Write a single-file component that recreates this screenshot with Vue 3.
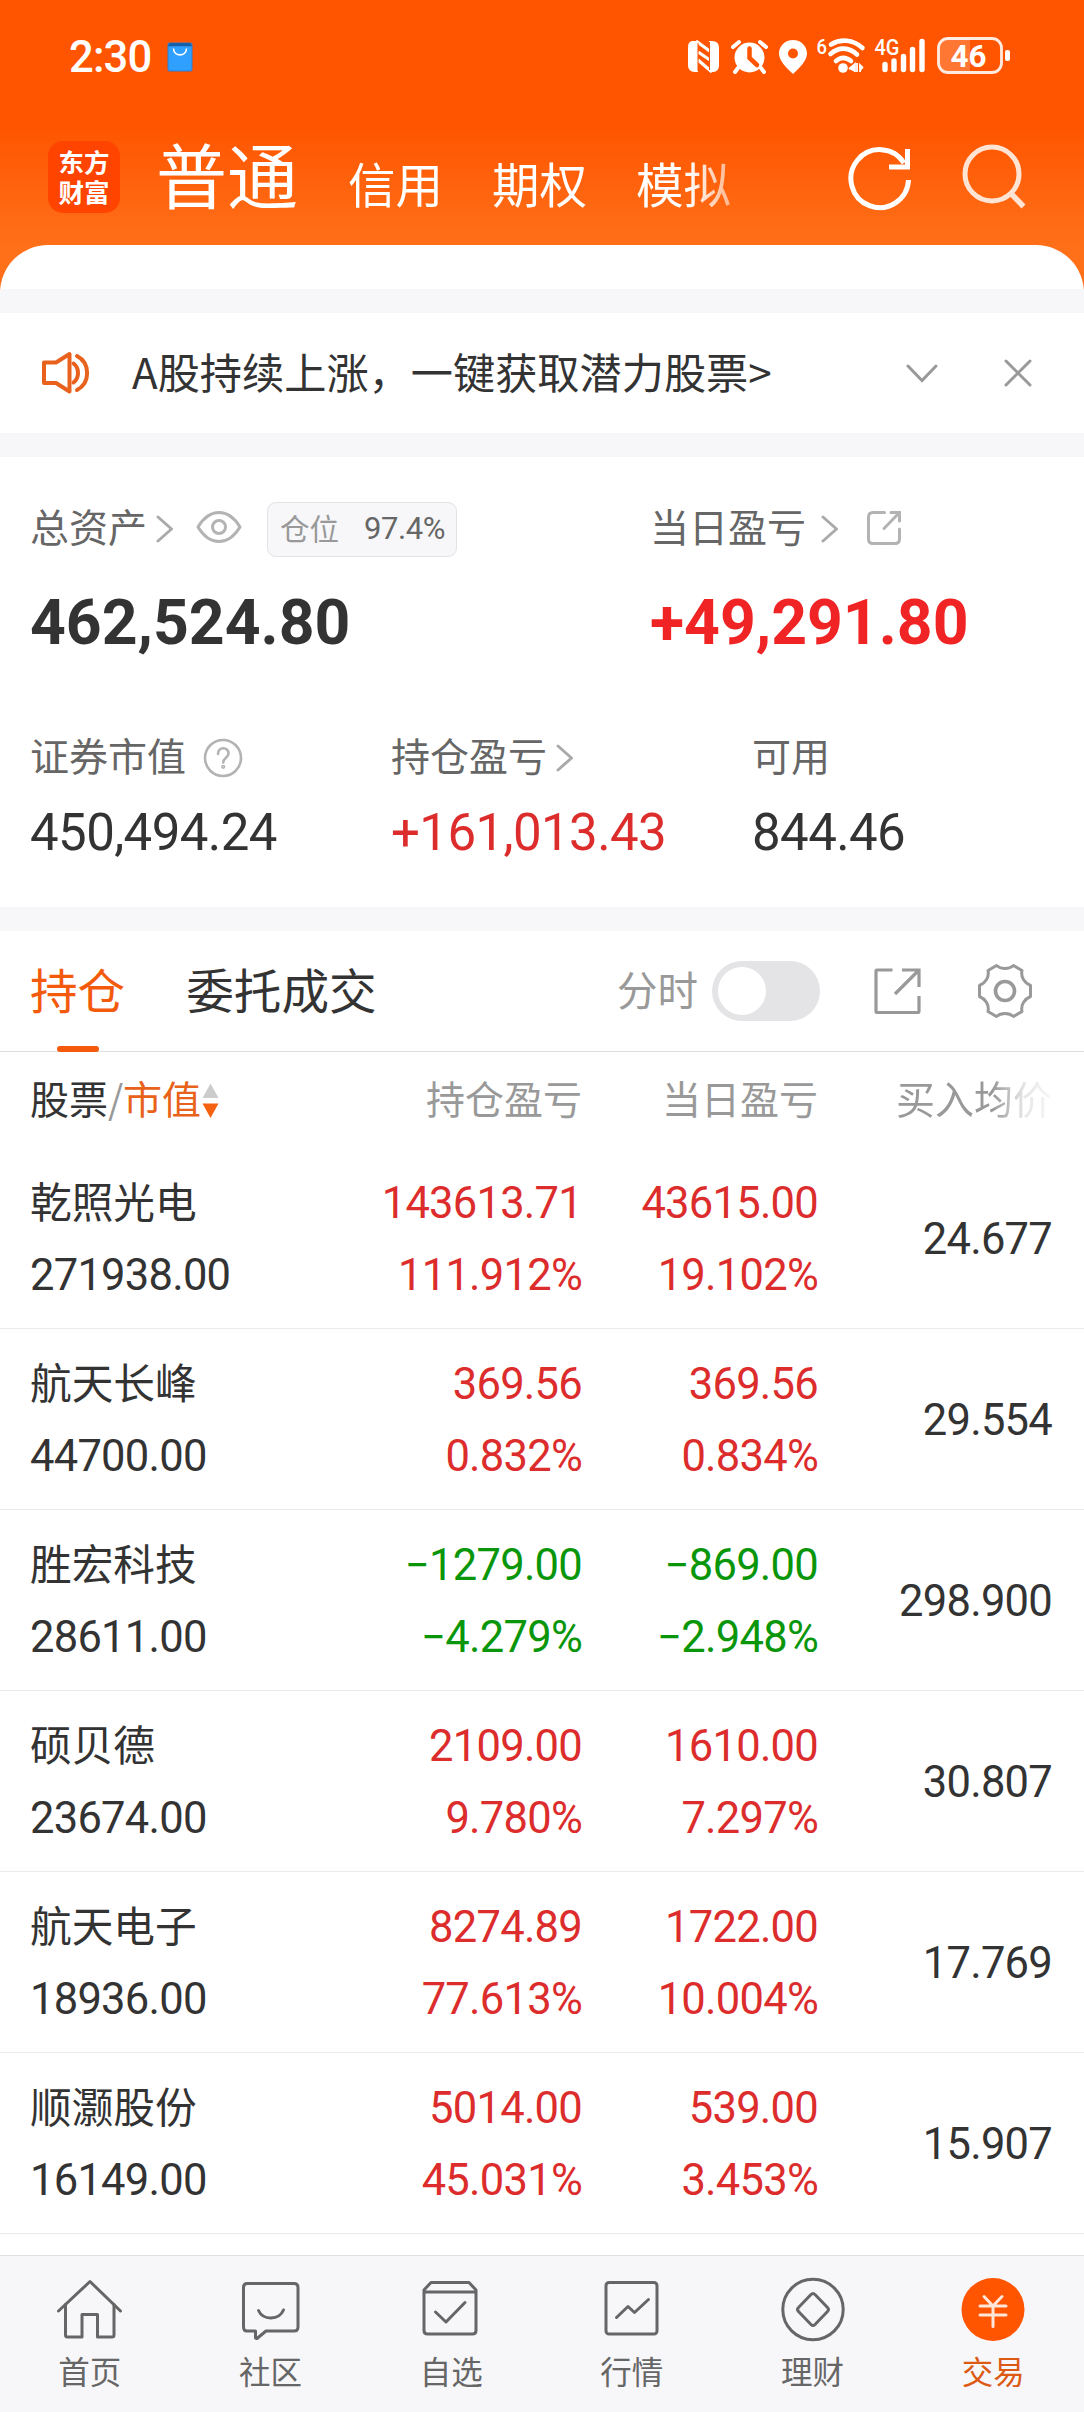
<script setup>
import { ref } from 'vue'

const accounts = ['信用', '期权', '模拟']

const holdings = ref([
  { name: '乾照光电', value: '271938.00', total: '143613.71', totalPct: '111.912%', day: '43615.00', dayPct: '19.102%', cost: '24.677' },
  { name: '航天长峰', value: '44700.00', total: '369.56', totalPct: '0.832%', day: '369.56', dayPct: '0.834%', cost: '29.554' },
  { name: '胜宏科技', value: '28611.00', total: '-1279.00', totalPct: '-4.279%', day: '-869.00', dayPct: '-2.948%', cost: '298.900' },
  { name: '硕贝德', value: '23674.00', total: '2109.00', totalPct: '9.780%', day: '1610.00', dayPct: '7.297%', cost: '30.807' },
  { name: '航天电子', value: '18936.00', total: '8274.89', totalPct: '77.613%', day: '1722.00', dayPct: '10.004%', cost: '17.769' },
  { name: '顺灏股份', value: '16149.00', total: '5014.00', totalPct: '45.031%', day: '539.00', dayPct: '3.453%', cost: '15.907' },
])

const tone = (v) => (v.startsWith('-') ? 'down' : 'up')
const shown = (v) => v.replace('-', '−')
</script>

<template>
  <div class="page">
    <header class="top">
      <div class="status">
        <span class="clock">2:30</span>
        <svg class="bag" width="26" height="30" viewBox="0 0 26 30">
          <rect x="0.5" y="0.5" width="25" height="29" rx="2.5" fill="#2f7fd0" />
          <path d="M3 1H23L25 4H1Z" fill="#1560a8" />
          <rect x="1.5" y="4.5" width="23" height="24" rx="1" fill="#2fa0ff" />
          <path d="M6.5 6.5C7 15 19 15 19.5 6.5" fill="none" stroke="#fff" stroke-width="1.6" />
        </svg>
        <svg class="sys" width="326" height="42" viewBox="686 34 326 42" fill="#fff">
          <path d="M693 41h5v31h-3c-5 0-7-3-7-7V47c0-4 2-6 5-6z" />
          <path d="M709 41h3c5 0 7 3 7 7v17c0 4-2 7-6 7h-4z" />
          <path d="M698 42L709 50V71L698 63Z" fill="#ff5500" />
          <path d="M696 41L711 52M698 52L710 60M698 60L712 72" stroke="#fff" stroke-width="3.2" />
          <path d="M698 43V71M709.500 42V70" stroke="#ff5500" stroke-width="1" />
          <circle cx="749.5" cy="57.500" r="15" />
          <path d="M733 47L739 42M766 47L760 42M738 68L735 72M761 68L764 72" stroke="#fff" stroke-width="4" stroke-linecap="round" />
          <path d="M749.500 48.500V58L757 65" fill="none" stroke="#ff5500" stroke-width="4.500" stroke-linecap="round" />
          <path fill-rule="evenodd" d="M793 40c8 0 14 6 14 13.500 0 7-7 14-14 20.500-7-6.500-14-13.500-14-20.500C779 46 785 40 793 40zm0 8.500a5 5 0 1 0 0 10 5 5 0 0 0 0-10z" />
          <text x="816.500" y="54" font-family="Roboto, sans-serif" font-size="21" font-weight="500" textLength="10.500" lengthAdjust="spacingAndGlyphs">6</text>
          <g fill="none" stroke="#fff" stroke-width="4.600" stroke-linecap="round">
            <path d="M831 44.500C841 38.500 853 39.500 862.500 48" />
            <path d="M830.500 54C839 46.500 849 47 857 54.500" />
            <path d="M836 61C840.500 57 846 57 851 61" />
          </g>
          <circle cx="843" cy="68" r="4.800" />
          <path d="M849 69L855 64V72M857 63V72M860 72V65L863 68" stroke="#fff" stroke-width="1.800" />
          <text x="874.500" y="54.500" font-family="Roboto, sans-serif" font-size="22" font-weight="500" textLength="25" lengthAdjust="spacingAndGlyphs">4G</text>
          <path d="M885 64.500V69.500M894 61V69.500M903.500 56.500V69.500M912.500 49.500V69.500M922 41.500V69.500" stroke="#fff" stroke-width="5.400" stroke-linecap="round" />
          <path d="M947 38H970V72H947Q939 72 939 64V46Q939 38 947 38Z" fill="#fff" fill-opacity="0.2" />
          <rect x="938.500" y="38.500" width="63" height="34" rx="9.500" fill="none" stroke="#fff" stroke-opacity="0.88" stroke-width="2.800" />
          <rect x="1005" y="50" width="5" height="11" rx="2" />
          <text x="950.500" y="67" font-family="Roboto, sans-serif" font-size="32" font-weight="700" textLength="36" lengthAdjust="spacingAndGlyphs">46</text>
        </svg>
      </div>

      <nav class="accounts">
        <div class="logo"><span>东方</span><span>财富</span></div>
        <span class="current">普通</span>
        <div class="others">
          <span v-for="a in accounts" :key="a">{{ a }}</span>
        </div>
        <svg class="refresh" width="66" height="66" viewBox="847 145 66 66" fill="none" stroke="#fff" stroke-width="5">
          <path d="M908.500 180A28.800 29 0 1 1 904 163" />
          <path d="M907.500 149V167H889" />
        </svg>
        <svg class="search" width="64" height="66" viewBox="961 144 64 66" fill="none" stroke="#ffe3d3" stroke-width="5">
          <circle cx="991" cy="174" r="27" />
          <path d="M1009.500 193L1022.500 206.500" stroke-width="5.500" />
        </svg>
      </nav>
    </header>

    <main class="sheet">
      <div class="lip"></div>

      <section class="notice">
        <svg width="50" height="44" viewBox="41 351 50 44" fill="none" stroke="#e8621e" stroke-width="4" stroke-linejoin="round" stroke-linecap="round">
          <path d="M44 362.500H56L69.500 354V391.500L56 383H44Z" />
          <path d="M73.500 363.500C79.500 368 79.500 378 73.500 382.500M77 356C90.500 363 90.500 383 77 390" />
        </svg>
        <p>A股持续上涨，一键获取潜力股票&gt;</p>
        <svg class="fold" width="32" height="20" viewBox="0 0 32 20" fill="none" stroke="#999" stroke-width="3" stroke-linecap="round">
          <path d="M2 3L16 17.500L30 3" />
        </svg>
        <svg class="close" width="28" height="28" viewBox="0 0 28 28" fill="none" stroke="#999" stroke-width="3" stroke-linecap="round">
          <path d="M2 2L26 26M26 2L2 26" />
        </svg>
      </section>

      <section class="assets">
        <div class="primary">
          <div class="cell">
            <div class="label">
              <span>总资产</span>
              <svg class="arrow" width="18" height="28" viewBox="0 0 18 28"><path d="M2 2L15.500 14L2 26" /></svg>
              <svg class="eye" width="46" height="34" viewBox="0 0 46 34" fill="none" stroke="#b3b3b3" stroke-width="3">
                <path d="M2 17C8 7 15 2.500 23 2.500S38 7 44 17C38 27 31 31.500 23 31.500S8 27 2 17Z" stroke-linejoin="round" />
                <circle cx="23" cy="17" r="6.500" />
              </svg>
              <span class="pill"><i>仓位</i><b>97.4%</b></span>
            </div>
            <div class="big">462,524.80</div>
          </div>
          <div class="cell">
            <div class="label">
              <span>当日盈亏</span>
              <svg class="arrow wide" width="18" height="28" viewBox="0 0 18 28"><path d="M2 2L15.500 14L2 26" /></svg>
              <svg class="share" width="36" height="36" viewBox="0 0 36 36" fill="none" stroke="#b3b3b3" stroke-width="3" stroke-linecap="round">
                <path d="M18.500 2.500H7Q2.500 2.500 2.500 7V29Q2.500 33.500 7 33.500H29Q33.500 33.500 33.500 29V19" />
                <path d="M25 2.500H33.500V11M33 3L18 18.500" />
              </svg>
            </div>
            <div class="big up-strong">+49,291.80</div>
          </div>
        </div>

        <div class="secondary">
          <div class="cell">
            <div class="label">
              <span>证券市值</span>
              <svg class="help" width="40" height="40" viewBox="0 0 40 40" fill="none" stroke="#b3b3b3" stroke-width="2.600">
                <circle cx="20" cy="20" r="18" />
                <path d="M15 16C15 8.500 25.500 8.500 25.500 15.500C25.500 19.500 20.200 20 20.200 24.500" stroke-linecap="round" />
                <circle cx="20.200" cy="28.800" r="0.800" />
              </svg>
            </div>
            <div class="mid">450,494.24</div>
          </div>
          <div class="cell">
            <div class="label">
              <span>持仓盈亏</span>
              <svg class="arrow near" width="18" height="28" viewBox="0 0 18 28"><path d="M2 2L15.500 14L2 26" /></svg>
            </div>
            <div class="mid up">+161,013.43</div>
          </div>
          <div class="cell">
            <div class="label"><span>可用</span></div>
            <div class="mid">844.46</div>
          </div>
        </div>
      </section>

      <section class="tabs">
        <span class="tab active">持仓</span>
        <span class="tab">委托成交</span>
        <span class="minute">分时</span>
        <span class="toggle"><i></i></span>
        <svg class="export" width="48" height="48" viewBox="0 0 48 48" fill="none" stroke="#999" stroke-width="3.200">
          <path d="M19.500 3H4Q3 3 3 4V44Q3 45.500 4 45.500H45Q46 45.500 46 44V29" />
          <path d="M29 3H46V20M45 4L22 27" />
        </svg>
        <svg class="gear" width="56" height="56" viewBox="-28 -28 56 56" fill="none" stroke="#999" stroke-width="3">
          <path d="M-8.500 -25.500C-4 -21.500 4 -21.500 8.500 -25.500L17 -20.500C15.500 -14 19.500 -8 25.500 -5.500V5.500C19.500 8 15.500 14 17 20.500L8.500 25.500C4 21.500 -4 21.500 -8.500 25.500L-17 20.500C-15.500 14 -19.500 8 -25.500 5.500V-5.500C-19.500 -8 -15.500 -14 -17 -20.500Z" stroke-linejoin="round" />
          <circle r="9.500" stroke-width="3.600" />
        </svg>
      </section>

      <section class="table">
        <div class="row head">
          <div class="c1">
            <span class="dark">股票</span><span class="slash">/</span><span class="hot">市值</span>
            <svg width="17" height="36" viewBox="0 0 17 36">
              <path d="M8.500 0.500L16.500 15H0.500Z" fill="#ccc" />
              <path d="M0.500 20.500H16.500L8.500 35Z" fill="#f56212" />
            </svg>
          </div>
          <div class="c2">持仓盈亏</div>
          <div class="c3">当日盈亏</div>
          <div class="c4"><span class="fading">买入均价</span></div>
        </div>
        <div v-for="h in holdings" :key="h.name" class="row item">
          <div class="c1">
            <span class="name">{{ h.name }}</span>
            <span>{{ h.value }}</span>
          </div>
          <div class="c2" :class="tone(h.total)">
            <span>{{ shown(h.total) }}</span>
            <span>{{ shown(h.totalPct) }}</span>
          </div>
          <div class="c3" :class="tone(h.day)">
            <span>{{ shown(h.day) }}</span>
            <span>{{ shown(h.dayPct) }}</span>
          </div>
          <div class="c4"><span>{{ h.cost }}</span></div>
        </div>
      </section>
    </main>

    <footer class="dock">
      <div class="entry">
        <svg width="68" height="68" viewBox="56 2275 68 68">
          <path d="M58.500 2311L90 2281.500L120.500 2311" />
          <path d="M65.500 2304.500V2335Q65.500 2337 67.500 2337H82V2314.500H97.500V2337H112Q114 2337 114 2335V2304.500" />
        </svg>
        <span>首页</span>
      </div>
      <div class="entry">
        <svg width="68" height="68" viewBox="236 2275 68 68">
          <path d="M246 2283.500H293Q297 2283.500 297 2287.500V2327Q297 2331 293 2331H265L256 2338.500L254.500 2338V2331H246Q242.500 2331 242.500 2327V2287.500Q242.500 2283.500 246 2283.500Z" />
          <path d="M257.500 2310.500C262 2320.500 278 2320.500 282.500 2310" />
        </svg>
        <span>社区</span>
      </div>
      <div class="entry">
        <svg width="68" height="68" viewBox="417 2275 68 68">
          <path d="M424 2292V2330.500Q424 2334 427.500 2334H472.500Q476 2334 476 2330.500V2290L469 2282.500H431L424 2290V2292H476" />
          <path d="M435.500 2312L446 2322L465 2302.500" />
        </svg>
        <span>自选</span>
      </div>
      <div class="entry">
        <svg width="68" height="68" viewBox="598 2275 68 68">
          <rect x="606" y="2282.500" width="51" height="51.500" rx="3" />
          <path d="M616.500 2317.500L628 2306.500L634.500 2312.500L648.500 2299.500" />
        </svg>
        <span>行情</span>
      </div>
      <div class="entry">
        <svg width="68" height="68" viewBox="778.500 2275 68 68">
          <circle cx="812.500" cy="2309.500" r="30.200" />
          <path d="M810.500 2294.500Q812.500 2292.500 814.500 2294.500L827 2307.500Q829 2309.500 827 2311.500L814.500 2324.500Q812.500 2326.500 810.500 2324.500L798 2311.500Q796 2309.500 798 2307.500Z" />
        </svg>
        <span>理财</span>
      </div>
      <div class="entry on">
        <svg width="68" height="68" viewBox="959.500 2275 68 68">
          <circle cx="993.500" cy="2309.500" r="31.500" fill="#ff5500" stroke="none" />
          <path d="M984.500 2296.500L993.500 2306L1002.500 2296.500M980.500 2306H1006.500M980.500 2315H1006.500M993.500 2306V2326.500" stroke="#ffe6d8" />
        </svg>
        <span>交易</span>
      </div>
    </footer>
  </div>
</template>

<style>
body {
  margin: 0;
}
</style>

<style scoped>
.page {
  width: 1084px;
  height: 2412px;
  display: flex;
  flex-direction: column;
  overflow: hidden;
  color: #333;
  font-family: "Noto Sans CJK SC", sans-serif;
  background: linear-gradient(#ff5500 125px, #ff6a14 220px, #ff7019 250px, #ff7019 300px, #fff 300px);
}
svg {
  display: block;
  flex: none;
}
.top {
  height: 245px;
  flex: none;
  color: #fff;
}
.status {
  height: 110px;
  display: flex;
  align-items: center;
}
.clock {
  margin: 6px 0 0 69px;
  width: 98px;
  font: 500 43.5px/50px Roboto, sans-serif;
  letter-spacing: -0.8px;
}
.bag {
  margin-top: 3px;
}
.sys {
  margin-left: auto;
  margin-right: 72px;
}
.accounts {
  display: flex;
  height: 135px;
  align-items: flex-start;
}
.logo {
  box-sizing: border-box;
  width: 72px;
  height: 72px;
  margin: 31px 0 0 48px;
  padding-top: 5px;
  border-radius: 15px;
  background: #ff4400;
  display: flex;
  flex-direction: column;
  align-items: center;
  font-size: 25.5px;
  line-height: 30px;
  font-weight: 700;
}
.current {
  margin: 12px 0 0 36px;
  width: 192px;
  font-size: 71px;
  line-height: 100px;
  font-weight: 400;
}
.others {
  display: flex;
  gap: 49px;
  width: 400px;
  padding-top: 38px;
  font-size: 47.5px;
  line-height: 70px;
  -webkit-mask-image: linear-gradient(90deg, #000 340px, rgba(0, 0, 0, 0.45) 390px);
  mask-image: linear-gradient(90deg, #000 340px, rgba(0, 0, 0, 0.45) 390px);
}
.refresh {
  margin: 35px 0 0 99px;
}
.search {
  margin: 34px 0 0 49px;
}
.sheet {
  flex: 1;
  min-height: 0;
  border-radius: 48px 48px 0 0;
  overflow: hidden;
  background: #fff;
}
.lip {
  height: 44px;
  border-bottom: 24px solid #f7f7fa;
}
.notice {
  height: 120px;
  display: flex;
  align-items: center;
  padding: 0 52px 0 41px;
  border-bottom: 24px solid #f7f7fa;
}
.notice p {
  margin: -4px 0 0 41px;
  font-size: 42.2px;
  line-height: 60px;
}
.fold {
  margin-left: auto;
}
.close {
  margin-left: 66px;
}
.assets {
  height: 450px;
  border-bottom: 24px solid #f7f7fa;
}
.primary,
.secondary {
  display: grid;
  padding-left: 30px;
}
.primary {
  grid-template-columns: 620px 1fr;
  padding-top: 42px;
}
.secondary {
  grid-template-columns: 361px 361px 1fr;
  padding-top: 73px;
}
.label {
  display: flex;
  align-items: center;
  height: 56px;
  font-size: 39px;
  line-height: 56px;
  color: #666;
}
.label > span:first-child {
  margin-top: -4px;
}
.arrow {
  margin: 4px 0 0 9px;
  fill: none;
  stroke: #aaa;
  stroke-width: 3;
  stroke-linecap: round;
  stroke-linejoin: round;
}
.arrow.wide {
  margin-left: 15px;
}
.arrow.near {
  margin: 4px 0 0 9px;
}
.eye {
  margin-left: 22px;
}
.share {
  margin: 2px 0 0 27px;
}
.help {
  margin: 4px 0 0 17px;
}
.pill {
  box-sizing: border-box;
  display: flex;
  align-items: center;
  width: 190px;
  height: 55px;
  margin: 4px 0 0 25px;
  padding-left: 12px;
  border: 1px solid #e3e3e6;
  border-radius: 9px;
  background: #f7f7fa;
}
.pill i {
  font-style: normal;
  font-size: 29.5px;
  line-height: 50px;
  margin-top: -5px;
  color: #999;
}
.pill b {
  margin: 0 0 0 25px;
  font: 400 31px/50px Roboto, sans-serif;
  letter-spacing: -0.4px;
}
.big {
  margin-top: 36px;
  font: 700 62.5px/64px Roboto, sans-serif;
}
.mid {
  margin-top: 19px;
  font: 400 51px/60px Roboto, sans-serif;
  letter-spacing: -0.6px;
}
.up-strong {
  color: #f02424;
}
.up {
  color: #dc2c2c;
}
.down {
  color: #0a960a;
}
.tabs {
  box-sizing: border-box;
  height: 121px;
  display: flex;
  align-items: center;
  padding: 0 51px 0 30px;
  border-bottom: 1px solid #dedede;
}
.tab {
  position: relative;
  font-size: 47.6px;
  line-height: 120px;
  margin-top: -5px;
}
.tab + .tab {
  margin-left: 61px;
}
.active {
  color: #f45a0c;
}
.active::after {
  content: "";
  position: absolute;
  left: 27px;
  bottom: -3px;
  width: 42px;
  height: 6px;
  border-radius: 3px;
  background: #f45a0c;
}
.minute {
  margin: -5px 14px 0 auto;
  font-size: 40.5px;
  color: #999;
}
.toggle {
  width: 108px;
  height: 60px;
  border-radius: 30px;
  background: #e4e4e7;
}
.toggle i {
  display: block;
  width: 48px;
  height: 48px;
  margin: 6px;
  border-radius: 50%;
  background: #fff;
}
.export {
  margin-left: 53px;
}
.gear {
  margin-left: 56px;
}
.row {
  display: grid;
  grid-template-columns: 321px 231px 236px 234px;
  padding-left: 30px;
  box-sizing: border-box;
}
.head {
  height: 96px;
  align-items: center;
  font-size: 39px;
  line-height: 60px;
  color: #999;
  text-align: right;
}
.head > div {
  margin-top: -6px;
}
.head .c1 {
  display: flex;
  align-items: center;
}
.head .c1 svg {
  margin: 8px 0 0 1px;
}
.dark {
  color: #333;
}
.slash {
  width: 15px;
  text-align: center;
}
.hot {
  color: #e8621a;
}
.fading {
  -webkit-mask-image: linear-gradient(90deg, #000 62%, rgba(0, 0, 0, 0.25) 82%, rgba(0, 0, 0, 0.08));
  mask-image: linear-gradient(90deg, #000 62%, rgba(0, 0, 0, 0.25) 82%, rgba(0, 0, 0, 0.08));
}
.item {
  height: 181px;
  padding-top: 4px;
  border-bottom: 1px solid #ebebeb;
  font: 400 43.5px/72px Roboto, sans-serif;
  letter-spacing: -0.75px;
}
.item > div {
  display: flex;
  flex-direction: column;
  justify-content: center;
  text-align: right;
}
.item > .c1 {
  text-align: left;
}
.name {
  height: 72px;
  font: 400 41.7px/65px "Noto Sans CJK SC", sans-serif;
  letter-spacing: 0;
}
.dock {
  box-sizing: border-box;
  height: 157px;
  flex: none;
  display: flex;
  border-top: 1px solid #dfdfe2;
  background: #f7f7fa;
}
.entry {
  flex: 1;
  display: flex;
  flex-direction: column;
  align-items: center;
  padding: 19px 1px 0 0;
  color: #666;
  font-size: 31.5px;
  line-height: 50px;
}
.entry svg {
  fill: none;
  stroke: #666;
  stroke-width: 3;
  stroke-linecap: round;
  stroke-linejoin: round;
}
.entry span {
  margin-top: 2px;
}
.on {
  color: #dd5a14;
}
</style>
